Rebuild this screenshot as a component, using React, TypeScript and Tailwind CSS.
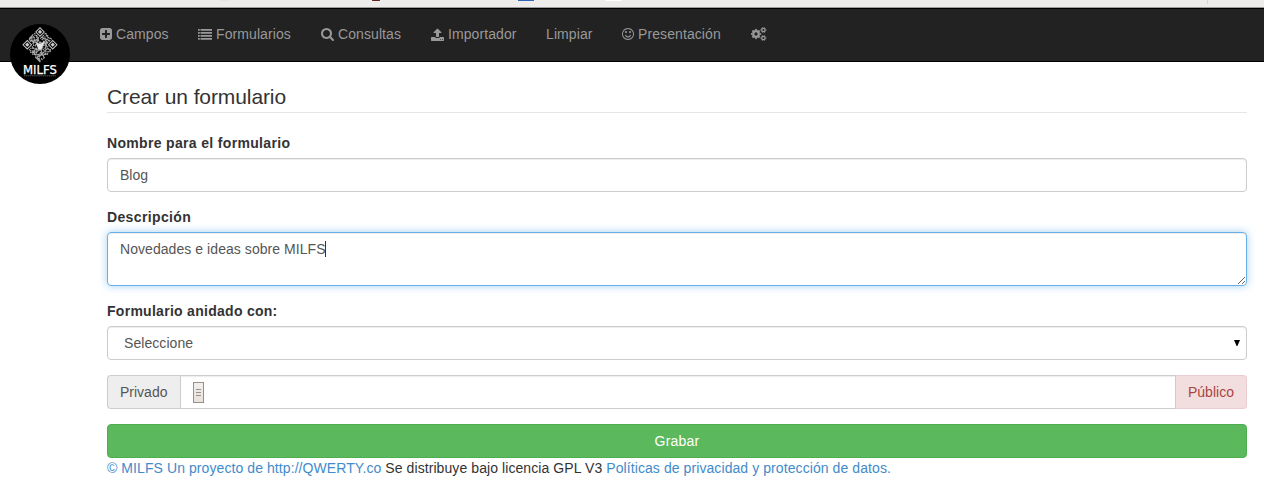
import type { ReactNode } from "react";

const PATHS = {
  plus: "M1408 960v-128q0-26-19-45t-45-19h-320v-320q0-26-19-45t-45-19h-128q-26 0-45 19t-19 45v320h-320q-26 0-45 19t-19 45v128q0 26 19 45t45 19h320v320q0 26 19 45t45 19h128q26 0 45-19t19-45v-320h320q26 0 45-19t19-45zm256-544v960q0 119-84.5 203.5t-203.5 84.5h-960q-119 0-203.5-84.5t-84.5-203.5v-960q0-119 84.5-203.5t203.5-84.5h960q119 0 203.5 84.5t84.5 203.5z",
  list: "M0 256h224v208h-224zM320 256h1472v208h-1472zM0 640h224v208h-224zM320 640h1472v208h-1472zM0 1024h224v208h-224zM320 1024h1472v208h-1472zM0 1408h224v208h-224zM320 1408h1472v208h-1472z",
  search: "M1216 832q0-185-131.5-316.5t-316.5-131.5-316.5 131.5-131.5 316.5 131.5 316.5 316.5 131.5 316.5-131.5 131.5-316.5zm512 832q0 52-38 90t-90 38q-54 0-90-38l-343-342q-179 124-399 124-143 0-273.5-55.5t-225-150-150-225-55.5-273.5 55.5-273.5 150-225 225-150 273.5-55.5 273.5 55.5 225 150 150 225 55.5 273.5q0 220-124 399l343 343q37 37 37 90z",
  upload: "M1344 1472q0-26-19-45t-45-19-45 19-19 45 19 45 45 19 45-19 19-45zm256 0q0-26-19-45t-45-19-45 19-19 45 19 45 45 19 45-19 19-45zm128-224v320q0 40-28 68t-68 28h-1472q-40 0-68-28t-28-68v-320q0-40 28-68t68-28h427q21 56 70.5 92t110.5 36h256q61 0 110.5-36t70.5-92h427q40 0 68 28t28 68zm-325-648q-17 40-59 40h-256v448q0 26-19 45t-45 19h-256q-26 0-45-19t-19-45v-448h-256q-42 0-59-40-17-39 14-69l448-448q18-19 45-19t45 19l448 448q31 30 14 69z",
  smile: "M1262 1075q-37 121-138 195t-228 74-228-74-138-195q-8-25 4-48.5t38-31.5q25-8 48.5 4t31.5 38q25 80 92.5 129.5t151.5 49.5 151.5-49.5 92.5-129.5q8-26 32-38t49-4 37 31.5 4 48.5zm-494-435q0 53-37.5 90.5t-90.5 37.5-90.5-37.5-37.5-90.5 37.5-90.5 90.5-37.5 90.5 37.5 37.5 90.5zm512 0q0 53-37.5 90.5t-90.5 37.5-90.5-37.5-37.5-90.5 37.5-90.5 90.5-37.5 90.5 37.5 37.5 90.5zm256 256q0-130-51-248.5t-136.5-204-204-136.5-248.5-51-248.5 51-204 136.5-136.5 204-51 248.5 51 248.5 136.5 204 204 136.5 248.5 51 248.5-51 204-136.5 136.5-204 51-248.5zm128 0q0 209-103 385.5t-279.5 279.5-385.5 103-385.5-103-279.5-279.5-103-385.5 103-385.5 279.5-279.5 385.5-103 385.5 103 279.5 279.5 103 385.5z",
};

function Glyph({ d, box, className }: { d: string; box: string; className: string }) {
  return (
    <svg viewBox={box} className={`shrink-0 fill-current ${className}`} aria-hidden="true">
      <path d={d} />
    </svg>
  );
}

function Gear({ cx, cy, r, stroke, teeth, toothLength }: { cx: number; cy: number; r: number; stroke: number; teeth: number; toothLength: number }) {
  return (
    <g stroke="currentColor" fill="none">
      <circle cx={cx} cy={cy} r={r} strokeWidth={stroke} />
      <circle
        cx={cx}
        cy={cy}
        r={r + stroke / 2 + toothLength / 2 - 0.1}
        strokeWidth={toothLength}
        pathLength={teeth * 2}
        strokeDasharray="1 1"
        strokeDashoffset={0.5}
      />
    </g>
  );
}

function Gears() {
  return (
    <svg viewBox="0 0 16 14" className="h-[14px] w-4 shrink-0" aria-hidden="true">
      <Gear cx={5} cy={7} r={2.8} stroke={2.3} teeth={8} toothLength={1.3} />
      <Gear cx={12.4} cy={3} r={1.7} stroke={1.3} teeth={6} toothLength={0.8} />
      <Gear cx={12.4} cy={11} r={1.7} stroke={1.3} teeth={6} toothLength={0.8} />
    </svg>
  );
}

const SIZE = 25;

function isFinder(x: number, y: number) {
  return (x < 8 && y < 8) || (x > 16 && y < 8) || (x < 8 && y > 16);
}

function modules() {
  const cells: [number, number][] = [];
  let seed = 77;
  for (let y = 0; y < SIZE; y++) {
    for (let x = 0; x < SIZE; x++) {
      seed = (seed * 1103515245 + 12345) % 2147483648;
      if (!isFinder(x, y) && seed / 2147483648 < 0.58) cells.push([x, y]);
    }
  }
  return cells;
}

function Logo() {
  return (
    <svg viewBox="0 0 60 60" className="absolute left-[10px] top-[15px] size-[60px]" aria-label="MILFS">
      <circle cx="30" cy="30" r="30" fill="#000" />
      <g transform="translate(30 3) rotate(45)" fill="#d0d0d0">
        {modules().map(([x, y]) => (
          <rect key={`${x}-${y}`} x={x} y={y} width="1.02" height="1.02" />
        ))}
        {[[0, 0], [18, 0], [0, 18]].map(([x, y]) => (
          <g key={`${x}-${y}`}>
            <rect x={x + 0.5} y={y + 0.5} width="6" height="6" fill="none" stroke="#c8c8c8" strokeWidth="1" />
            <rect x={x + 2} y={y + 2} width="3" height="3" />
          </g>
        ))}
      </g>
      <path d="M25.5 17.5l3 2h3l3-2-1.5 4-1.5 4h-3l-1.5-4z" fill="#e4e4e4" />
      <text x="13" y="50" textLength="34" lengthAdjust="spacingAndGlyphs" fontFamily="DejaVu Sans, sans-serif" fontSize="12" fill="#fff" stroke="#fff" strokeWidth="0.25">
        MILFS
      </text>
      <path d="M14 51.8h32" stroke="#666" strokeWidth="0.8" strokeDasharray="1.5 .4" />
    </svg>
  );
}

function NavItem({ width, children }: { width: string; children?: ReactNode }) {
  return (
    <a href="#" className={`flex h-[50px] shrink-0 items-center whitespace-nowrap tracking-[0.09px] ${width}`}>
      {children}
    </a>
  );
}

const field = "h-[34px] w-full rounded-[4px] border border-[#ccc] bg-white shadow-[inset_0_1px_1px_rgba(0,0,0,0.075)]";
const label = "mb-[5px] block h-5 font-bold leading-5";

export default function App() {
  return (
    <div className="h-[493px] overflow-hidden bg-white font-['Liberation_Sans',Arial,sans-serif] text-[14px] leading-5 text-[#333]">
      <div className="flex h-2 items-start border-b border-[#9c9c9c] bg-[#edecea]">
        <i className="ml-[220px] h-px w-[10px] bg-[#e2e5e2]" />
        <i className="ml-[142px] h-px w-2 rounded-full bg-[#662020]" />
        <i className="ml-[138px] h-px w-4 bg-[#3465b4]" />
        <i className="ml-[72px] h-px w-4 bg-white" />
        <i className="ml-[585px] h-1 w-px bg-[#d5d3d1]" />
      </div>
      <nav className="relative flex h-[54px] border-y border-black bg-[#222] pl-[100px] text-[#999]">
        <Logo />
        <NavItem width="w-[98px]">
          <Glyph d={PATHS.plus} box="128 128 1536 1536" className="mr-1 size-3" />
          Campos
        </NavItem>
        <NavItem width="w-[123px]">
          <Glyph d={PATHS.list} box="0 0 1792 1792" className="mr-1 size-[14px]" />
          Formularios
        </NavItem>
        <NavItem width="w-[110px]">
          <Glyph d={PATHS.search} box="64 128 1664 1664" className="mr-1 size-[13px]" />
          Consultas
        </NavItem>
        <NavItem width="w-[115px]">
          <Glyph d={PATHS.upload} box="64 0 1664 1664" className="mr-1 size-[13px]" />
          Importador
        </NavItem>
        <NavItem width="w-[76px]">Limpiar</NavItem>
        <NavItem width="w-[129px]">
          <Glyph d={PATHS.smile} box="128 128 1536 1536" className="mr-1 size-3" />
          Presentación
        </NavItem>
        <NavItem width="w-4">
          <Gears />
        </NavItem>
      </nav>
      <main className="ml-[107px] w-[1140px] pt-5">
        <h1 className="mb-5 h-[31px] border-b border-[#e5e5e5] text-[21px] leading-[30px] tracking-[-0.1px]">Crear un formulario</h1>
        <label htmlFor="nombre" className={`tracking-[0.33px] ${label}`}>Nombre para el formulario</label>
        <input id="nombre" defaultValue="Blog" className={`mb-[15px] block px-3 text-[#555] outline-none ${field}`} />
        <label htmlFor="descripcion" className={`tracking-[0.36px] ${label}`}>Descripción</label>
        <div className="relative mb-[15px] h-[54px]">
          <textarea
            id="descripcion"
            defaultValue="Novedades e ideas sobre MILFS"
            className="block h-[54px] w-full resize-y overflow-hidden rounded-[4px] border border-[#66afe9] px-3 py-[6px] tracking-[0.06px] text-[#555] shadow-[inset_0_1px_1px_rgba(0,0,0,0.075),0_0_8px_rgba(102,175,233,0.6)] outline-none"
          />
          <span className="absolute left-[218px] top-[9px] h-4 w-px bg-[#333]" />
        </div>
        <label className={`tracking-[0.28px] ${label}`}>Formulario anidado con:</label>
        <div role="combobox" className={`mb-[15px] flex items-center justify-between pl-4 pr-[6px] text-[#555] ${field}`}>
          <span className="tracking-[0.06px]">Seleccione</span>
          <svg viewBox="0 0 6 6" className="h-[6px] w-[6px]" aria-hidden="true">
            <path d="M0 0h6L3.4 6h-.8z" fill="#000" />
          </svg>
        </div>
        <div className="mb-[15px] flex h-[34px]">
          <span className="flex w-[73px] items-center rounded-l-[4px] border border-r-0 border-[#ccc] bg-[#eee] pl-3 text-[#555]">Privado</span>
          <div className="flex flex-1 items-center border border-[#ccc] pl-3 shadow-[inset_0_1px_1px_rgba(0,0,0,0.075)]">
            <span className="flex h-[21px] w-[11px] flex-col items-center justify-center gap-[2px] border border-[#999088] bg-gradient-to-b from-[#f3efec] to-[#e8e1dc]">
              <i className="h-px w-[5px] bg-[#999088]" />
              <i className="h-px w-[5px] bg-[#999088]" />
              <i className="h-px w-[5px] bg-[#999088]" />
            </span>
          </div>
          <span className="flex w-[71px] items-center rounded-r-[4px] border border-l-0 border-[#ebccd1] bg-[#f2dede] pl-3 text-[#a94442]">Público</span>
        </div>
        <button className="block h-[34px] w-full rounded-[4px] border border-[#4cae4c] bg-[#5cb85c] tracking-[0.2px] text-white">Grabar</button>
        <footer className="whitespace-nowrap tracking-[0.08px]">
          <a href="#" className="text-[#428bca]">© MILFS Un proyecto de http://QWERTY.co</a> Se distribuye bajo licencia GPL V3{" "}
          <a href="#" className="text-[#428bca]">Políticas de privacidad y protección de datos.</a>
        </footer>
      </main>
    </div>
  );
}
